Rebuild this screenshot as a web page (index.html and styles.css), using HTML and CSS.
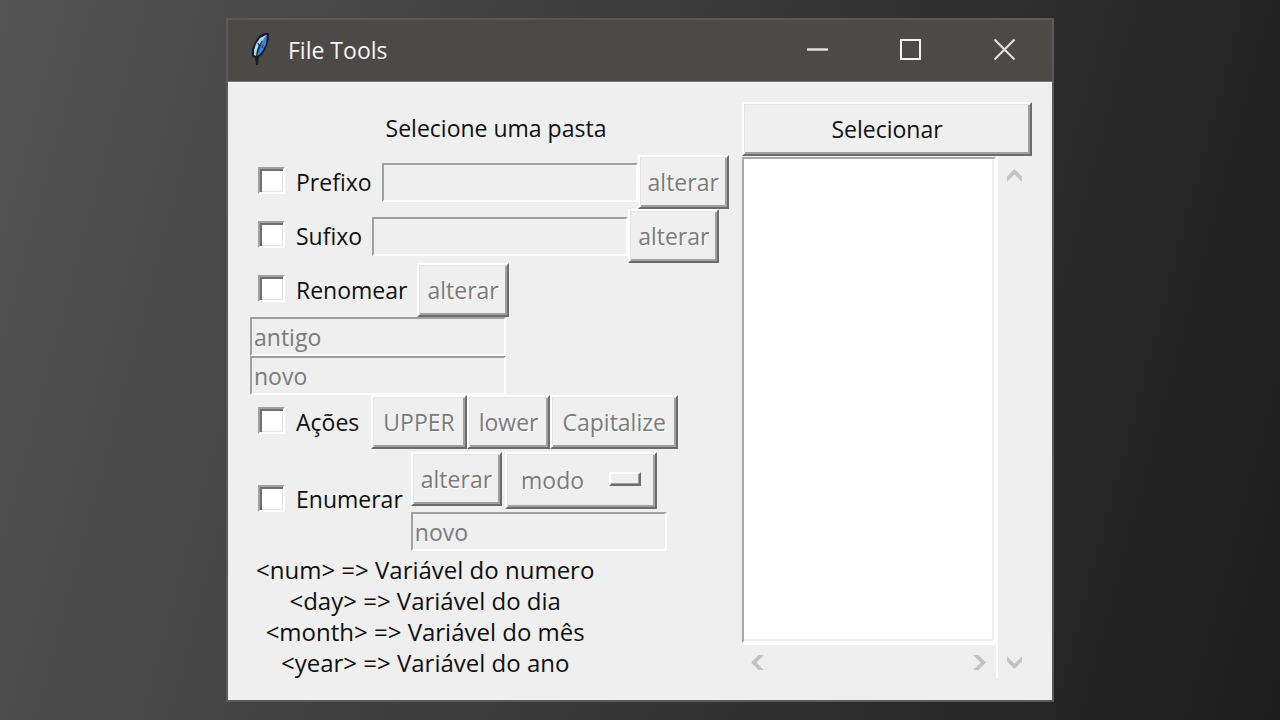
FILE: index.html
```html
<!DOCTYPE html>
<html lang="pt-BR">
<head>
<meta charset="utf-8">
<meta name="viewport" content="width=device-width, initial-scale=1">
<title>File Tools</title>
<link rel="stylesheet" href="styles.css">
</head>
<body>
<main class="window">
  <header class="titlebar">
    <svg class="feather" viewBox="0 0 20 34" aria-hidden="true">
      <path d="M15 1 L19 1 L19 6 L17 13 L15 18 L12 23 L9 25 L8 33 L6 33 L5 26 L2 24 L2 17 L5 10 L8 5 L12 2 Z" fill="#171b22"/>
      <path d="M15 3 L17 3 L16 12 L13 18 L10 22 L7 24 L9 17 L12 9 Z" fill="#3f86d8"/>
      <path d="M16 3 L10 6 L6 12 L4 18 L4 23 L6 24 L7 18 L9 13 L13 8 Z" fill="#b4d5f2"/>
      <path d="M12 9 L10 14 L8 20 M8 11 L9 14 M13 13 L12 16" fill="none" stroke="#1c3d66" stroke-width="1.2"/>
    </svg>
    <h1 class="title">File Tools</h1>
    <button class="control" type="button" aria-label="Minimizar">
      <svg viewBox="0 0 22 22"><path d="M1 10.5H22" stroke="#e4e4e2" stroke-width="2.4"/></svg>
    </button>
    <button class="control" type="button" aria-label="Maximizar">
      <svg viewBox="0 0 22 22"><rect x="1" y="1" width="19" height="19" fill="none" stroke="#f4f4f2" stroke-width="2"/></svg>
    </button>
    <button class="control" type="button" aria-label="Fechar">
      <svg viewBox="0 0 22 22"><path d="M.5 .5L20.500 20.500M20.500 .5L.5 20.500" stroke="#dededc" stroke-width="2.2"/></svg>
    </button>
  </header>

  <div class="client">
    <form class="tools">
      <p class="folder">Selecione uma pasta</p>
      <div class="row">
        <label class="check"><input type="checkbox">Prefixo</label>
        <input class="entry" type="text" aria-label="Prefixo" disabled>
        <button class="button" type="button" disabled>alterar</button>
      </div>
      <div class="row">
        <label class="check"><input type="checkbox">Sufixo</label>
        <input class="entry" type="text" aria-label="Sufixo" disabled>
        <button class="button" type="button" disabled>alterar</button>
      </div>
      <div class="row">
        <label class="check"><input type="checkbox">Renomear</label>
        <button class="button" type="button" disabled>alterar</button>
      </div>
      <input class="entry" type="text" aria-label="Texto antigo" value="antigo" disabled>
      <input class="entry" type="text" aria-label="Texto novo" value="novo" disabled>
      <div class="row actions">
        <label class="check"><input type="checkbox">Ações</label>
        <button class="button" type="button" disabled>UPPER</button>
        <button class="button" type="button" disabled>lower</button>
        <button class="button" type="button" disabled>Capitalize</button>
      </div>
      <div class="row enumerate">
        <label class="check"><input type="checkbox">Enumerar</label>
        <div class="stack">
          <div class="pair">
            <button class="button" type="button" disabled>alterar</button>
            <div class="mode">
              <select aria-label="Modo" disabled><option>modo</option></select>
            </div>
          </div>
          <input class="entry" type="text" aria-label="Novo nome" value="novo" disabled>
        </div>
      </div>
      <p class="help">&lt;num&gt; =&gt; Variável do numero<br>&lt;day&gt; =&gt; Variável do dia<br>&lt;month&gt; =&gt; Variável do mês<br>&lt;year&gt; =&gt; Variável do ano</p>
    </form>

    <section class="files">
      <button class="button" type="button">Selecionar</button>
      <div class="browser">
        <select class="list" multiple aria-label="Arquivos"></select>
        <div class="scroll scroll-v">
          <button type="button" aria-label="Rolar para cima"><svg viewBox="0 0 16 16"><path d="M1 8L8 1L15 8V13L8 6L1 13Z"/></svg></button>
          <button type="button" aria-label="Rolar para baixo"><svg viewBox="0 0 16 16"><path d="M1 3L8 10L15 3V8L8 15L1 8Z"/></svg></button>
        </div>
        <div class="scroll scroll-h">
          <button type="button" aria-label="Rolar para a esquerda"><svg viewBox="0 0 16 16"><path d="M8 1L1 8L8 15H13L6 8L13 1Z"/></svg></button>
          <button type="button" aria-label="Rolar para a direita"><svg viewBox="0 0 16 16"><path d="M8 1L15 8L8 15H3L10 8L3 1Z"/></svg></button>
        </div>
      </div>
    </section>
  </div>
</main>
</body>
</html>
```

FILE: styles.css
```css
*,
*::after {
  box-sizing: border-box;
}

body {
  margin: 0;
  min-height: 100vh;
  padding: 18px;
  background: linear-gradient(105deg, #545454, #1d1d1d);
  font-family: "Open Sans", "Noto Sans", sans-serif;
  font-size: 23px;
  line-height: 31px;
  color: #101010;
}

button,
input,
select {
  margin: 0;
  font: inherit;
  color: inherit;
}

p,
h1 {
  margin: 0;
  font: inherit;
}

.window {
  max-width: 828px;
  margin: 0 auto;
  border: 2px solid #5a5a5a;
  background: #efefef;
}

.titlebar {
  display: flex;
  align-items: center;
  height: 62px;
  padding-left: 22px;
  background: #4b4a47;
  border-bottom: 1px solid #7c7b79;
  color: #f6f6f6;
}

.feather {
  width: 20px;
  height: 34px;
  margin-bottom: 4px;
}

.title {
  flex: 1;
  padding-left: 18px;
}

.control {
  display: grid;
  place-items: center;
  width: 94px;
  height: 60px;
  padding: 0 0 2px;
  border: 0;
  background: none;
}

.control svg {
  width: 22px;
  height: 22px;
}

.client {
  display: grid;
  grid-template-columns: 1fr 290px;
  padding: 20px 20px 22px 22px;
}

.tools {
  display: flex;
  flex-direction: column;
  align-items: flex-start;
}

.folder {
  align-self: stretch;
  padding: 11px 0;
  text-align: center;
}

.row {
  display: flex;
  align-items: center;
}

.check {
  display: flex;
  align-items: center;
  gap: 11px;
  padding: 0 10px 0 8px;
}

.check input {
  appearance: none;
  width: 27px;
  height: 27px;
  margin-bottom: 3px;
  border: 2px solid;
  border-color: #a0a0a0 #fff #fff #a0a0a0;
  background: #fff;
  box-shadow: inset 2px 2px #6f6f6f, inset -1px -1px #e3e3e3;
}

.button {
  height: 54px;
  padding: 0 8px;
  border: 2px solid;
  border-color: #fff #6c6c6c #6c6c6c #fff;
  background: #efefef;
  box-shadow: inset 1px 1px #e3e3e3, inset -2px -2px #a0a0a0;
}

.button:disabled,
.mode select:disabled {
  color: #7b7b7b;
  opacity: 1;
  text-shadow: 1px 1px #fff;
}

.actions .check {
  padding-right: 12px;
}

.actions .button {
  padding: 0 10px;
}

.entry {
  width: 256px;
  height: 39px;
  padding: 0 2px;
  border: 2px solid;
  border-color: #a0a0a0 #fff #fff #a0a0a0;
  border-radius: 0;
  background: #efefef;
  color: #7b7b7b;
}

.enumerate {
  padding: 3px 0;
}

.enumerate .check {
  padding-right: 8px;
  padding-bottom: 4px;
}

.stack {
  display: grid;
  gap: 3px;
}

.pair {
  display: flex;
  align-items: flex-start;
  gap: 3px;
}

.mode {
  position: relative;
}

.mode select {
  appearance: none;
  width: 152px;
  height: 57px;
  padding: 0 14px;
  border: 2px solid;
  border-color: #fff #6c6c6c #6c6c6c #fff;
  border-radius: 0;
  background: #efefef;
  box-shadow: inset 1px 1px #e3e3e3, inset -2px -2px #a0a0a0;
}

.mode::after {
  content: "";
  position: absolute;
  right: 16px;
  top: 20px;
  width: 32px;
  height: 14px;
  border: 2px solid;
  border-color: #fff #6c6c6c #6c6c6c #fff;
  box-shadow: inset -1px -1px #a0a0a0;
  pointer-events: none;
}

.help {
  padding: 0 6px;
  font-size: 24px;
  text-align: center;
}

.files {
  display: flex;
  flex-direction: column;
  gap: 1px;
}

.browser {
  flex: 1;
  display: grid;
  grid-template-columns: 1fr 36px;
  grid-template-rows: 1fr 35px;
}

.list {
  appearance: none;
  width: 100%;
  height: 100%;
  padding: 0;
  border: 2px solid;
  border-color: #a8a8a8 #fff #fff #a8a8a8;
  border-radius: 0;
  background: #fff;
  box-shadow: inset -2px -2px #efefef;
}

.scroll {
  display: flex;
  justify-content: space-between;
}

.scroll button {
  display: grid;
  place-items: center;
  width: 32px;
  height: 34px;
  padding: 0;
  border: 0;
  background: none;
}

.scroll svg {
  width: 17px;
  height: 17px;
  fill: #c3c3c3;
}

.scroll-v {
  grid-row: 1 / 3;
  grid-column: 2;
  flex-direction: column;
  padding-top: 2px;
  border-left: 2px solid #fff;
}

.scroll-h {
  padding-right: 2px;
  border-top: 2px solid #fff;
}
```
